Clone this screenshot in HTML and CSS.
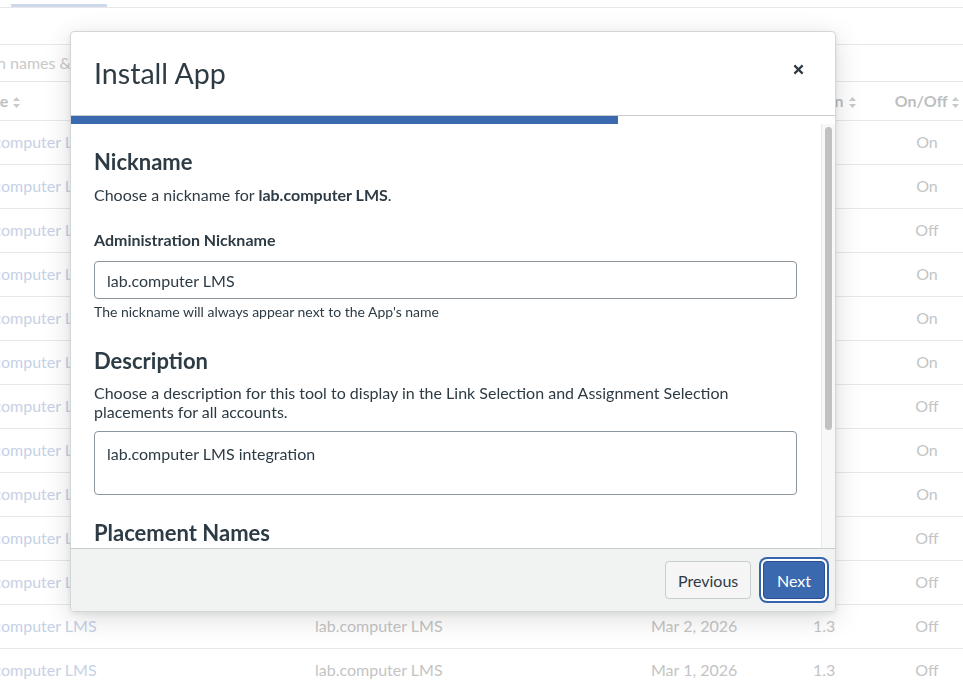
FILE: index.html
```html
<!DOCTYPE html>
<html lang="en">
<head>
<meta charset="utf-8">
<title>Install App</title>
<link rel="stylesheet" href="styles.css">
</head>
<body>
<div class="page">
  <div class="tabs"><div class="tab-active"></div></div>
  <div class="spacer"></div>
  <div class="search">n names &amp; descriptions</div>
  <div class="table">
    <div class="row head">
      <div class="c1"><span class="h-name">Name</span> <svg class="sort" viewBox="0 0 7 11"><path d="M3.5 0L7 4H0Z M3.5 11L0 7H7Z"/></svg></div>
      <div class="c2">Nickname <svg class="sort" viewBox="0 0 7 11"><path d="M3.5 0L7 4H0Z M3.5 11L0 7H7Z"/></svg></div>
      <div class="c3">Installed <svg class="sort" viewBox="0 0 7 11"><path d="M3.5 0L7 4H0Z M3.5 11L0 7H7Z"/></svg></div>
      <div class="c4"><span class="h-ver">Version</span> <svg class="sort" viewBox="0 0 7 11"><path d="M3.5 0L7 4H0Z M3.5 11L0 7H7Z"/></svg></div>
      <div class="c5">On/Off <svg class="sort" viewBox="0 0 7 11"><path d="M3.5 0L7 4H0Z M3.5 11L0 7H7Z"/></svg></div>
    </div>
    <div class="row"><div class="c1 link">lab.computer LMS</div><div class="c2">lab.computer LMS</div><div class="c3">Mar 13, 2026</div><div class="c4">1.3</div><div class="c5">On</div></div>
    <div class="row"><div class="c1 link">lab.computer LMS</div><div class="c2">lab.computer LMS</div><div class="c3">Mar 12, 2026</div><div class="c4">1.3</div><div class="c5">On</div></div>
    <div class="row"><div class="c1 link">lab.computer LMS</div><div class="c2">lab.computer LMS</div><div class="c3">Mar 11, 2026</div><div class="c4">1.3</div><div class="c5">Off</div></div>
    <div class="row"><div class="c1 link">lab.computer LMS</div><div class="c2">lab.computer LMS</div><div class="c3">Mar 10, 2026</div><div class="c4">1.3</div><div class="c5">On</div></div>
    <div class="row"><div class="c1 link">lab.computer LMS</div><div class="c2">lab.computer LMS</div><div class="c3">Mar 9, 2026</div><div class="c4">1.3</div><div class="c5">On</div></div>
    <div class="row"><div class="c1 link">lab.computer LMS</div><div class="c2">lab.computer LMS</div><div class="c3">Mar 8, 2026</div><div class="c4">1.3</div><div class="c5">On</div></div>
    <div class="row"><div class="c1 link">lab.computer LMS</div><div class="c2">lab.computer LMS</div><div class="c3">Mar 7, 2026</div><div class="c4">1.3</div><div class="c5">Off</div></div>
    <div class="row"><div class="c1 link">lab.computer LMS</div><div class="c2">lab.computer LMS</div><div class="c3">Mar 6, 2026</div><div class="c4">1.3</div><div class="c5">On</div></div>
    <div class="row"><div class="c1 link">lab.computer LMS</div><div class="c2">lab.computer LMS</div><div class="c3">Mar 5, 2026</div><div class="c4">1.3</div><div class="c5">On</div></div>
    <div class="row"><div class="c1 link">lab.computer LMS</div><div class="c2">lab.computer LMS</div><div class="c3">Mar 4, 2026</div><div class="c4">1.3</div><div class="c5">Off</div></div>
    <div class="row"><div class="c1 link">lab.computer LMS</div><div class="c2">lab.computer LMS</div><div class="c3">Mar 3, 2026</div><div class="c4">1.3</div><div class="c5">Off</div></div>
    <div class="row"><div class="c1 link">lab.computer LMS</div><div class="c2">lab.computer LMS</div><div class="c3">Mar 2, 2026</div><div class="c4">1.3</div><div class="c5">Off</div></div>
    <div class="row"><div class="c1 link">lab.computer LMS</div><div class="c2">lab.computer LMS</div><div class="c3">Mar 1, 2026</div><div class="c4">1.3</div><div class="c5">Off</div></div>
  </div>
</div>

<div class="modal" role="dialog" aria-label="Install App">
  <div class="modal-header">
    <h1 class="modal-title">Install App</h1>
    <button class="close" aria-label="Close">
      <svg viewBox="0 0 12 12" width="12" height="12"><path d="M1.5 1.5L10.5 10.5M10.5 1.5L1.5 10.5"/></svg>
    </button>
  </div>
  <div class="progress"><div class="progress-fill" style="width:71.6%"></div></div>
  <div class="modal-body">
    <div class="body-content">
      <h2 class="sec first">Nickname</h2>
      <p class="lead">Choose a nickname for <strong>lab.computer LMS</strong>.</p>
      <label class="field-label" for="nick">Administration Nickname</label>
      <input id="nick" class="text-input" type="text" value="lab.computer LMS">
      <div class="hint">The nickname will always appear next to the App's name</div>

      <h2 class="sec">Description</h2>
      <p class="lead lead2">Choose a description for this tool to display in the Link Selection and Assignment Selection placements for all accounts.</p>
      <textarea class="text-area">lab.computer LMS integration</textarea>

      <h2 class="sec sec3">Placement Names</h2>
      <label class="field-label sub" for="p1">Link Selection</label>
      <input id="p1" class="text-input" type="text" value="lab.computer LMS">
      <label class="field-label sub" for="p2">Assignment Selection</label>
      <input id="p2" class="text-input" type="text" value="lab.computer LMS">
    </div>
    <div class="scrollbar"><div class="thumb"></div></div>
  </div>
  <div class="modal-footer">
    <button class="btn btn-secondary">Previous</button>
    <button class="btn btn-primary">Next</button>
  </div>
</div>
</body>
</html>
```

FILE: styles.css
```css
* { box-sizing: border-box; }

html, body {
  margin: 0;
  padding: 0;
}

body {
  font-family: Lato, "Noto Sans", "Liberation Sans", sans-serif;
  color: #2d3b45;
  background: #fff;
  overflow: hidden;
  width: 963px;
  height: 687px;
}

/* ---------- background page (dimmed) ---------- */
.page {
  width: 963px;
  height: 687px;
  overflow: hidden;
}

.tabs {
  height: 8px;
  border-bottom: 1px solid #e8e8e8;
  display: flex;
  align-items: flex-start;
}

.tab-active {
  margin-left: 11px;
  margin-top: 4px;
  width: 96px;
  height: 3px;
  background: #cdd8ea;
}

.spacer {
  height: 37px;
  border-bottom: 1px solid #e8e8e8;
}

.search {
  height: 37px;
  border-bottom: 1px solid #e8e8e8;
  display: flex;
  align-items: center;
  margin-left: -3px;
  padding-bottom: 1px;
  font-size: 16px;
  color: #c9c9c9;
  white-space: nowrap;
}

.table {
  margin-left: -31px;
}

.row {
  display: flex;
  align-items: center;
  height: 44px;
  padding-bottom: 2px;
  border-bottom: 1px solid #e8e8e8;
  font-size: 16px;
  color: #c4c4c4;
  white-space: nowrap;
}

.row.head {
  height: 39px;
  padding-bottom: 1px;
  font-weight: 700;
  color: #bcbfc2;
}

.c1 { width: 346px; }
.c2 { width: 336px; }
.c3 { width: 162px; }
.c4 { width: 78px; }
.c5 { width: 72px; text-align: center; }

.h-name { margin-left: -3px; }
.h-ver { margin-left: -23px; }

.link { color: #c6d1e6; }

.sort {
  width: 7px;
  height: 11px;
  fill: #c8cacc;
  vertical-align: -1px;
  margin-left: 1px;
}

/* ---------- modal ---------- */
.modal {
  position: fixed;
  left: 70px;
  top: 31px;
  width: 766px;
  height: 581px;
  background: #fff;
  border: 1px solid #d3d6d9;
  border-radius: 4px;
  box-shadow: 0 6px 28px rgba(0, 0, 0, 0.14), 0 2px 6px rgba(0, 0, 0, 0.08);
  display: flex;
  flex-direction: column;
  overflow: hidden;
}

.modal-header {
  height: 84px;
  flex: none;
  border-bottom: 1px solid #c7cdd1;
  display: flex;
  align-items: center;
  justify-content: space-between;
  padding: 0 27px 0 23px;
}

.modal-title {
  margin: 0;
  font-size: 28.6px;
  font-weight: 400;
  line-height: 1.2;
  color: #2d3b45;
}

.close {
  width: 20px;
  height: 20px;
  margin-bottom: 8px;
  padding: 0;
  border: 0;
  background: transparent;
  display: flex;
  align-items: center;
  justify-content: center;
  cursor: pointer;
}

.close svg {
  width: 11px;
  height: 11px;
  stroke: #2d3b45;
  stroke-width: 2.4;
  fill: none;
}

.progress {
  height: 8px;
  flex: none;
  background: #fff;
}

.progress-fill {
  height: 100%;
  background: #3b69b0;
}

.modal-body {
  flex: 1;
  min-height: 0;
  display: flex;
}

.body-content {
  flex: 1;
  min-width: 0;
  overflow: hidden;
  padding: 0 24px 0 23px;
}

.scrollbar {
  flex: none;
  width: 14px;
  background: #f8f8f8;
  border-left: 1px solid #e9e9e9;
  padding: 3px 3px 0 3px;
}

.thumb {
  width: 7px;
  height: 303px;
  background: #c1c1c1;
  border-radius: 4px;
}

.sec {
  margin: 25px 0 0;
  font-size: 22px;
  font-weight: 700;
  line-height: 28px;
  color: #2d3b45;
}

.sec.first { margin-top: 24px; }
.sec.sec3 { margin-top: 24px; }

.lead {
  margin: 9px 0 0;
  font-size: 16px;
  line-height: 19px;
}

.lead2 { margin-top: 8px; }

.lead strong { font-weight: 700; }

.field-label {
  display: block;
  margin-top: 24px;
  font-size: 16px;
  font-weight: 700;
  line-height: 24px;
}

.field-label.sub { margin-top: 10px; }

.text-input {
  display: block;
  width: 100%;
  height: 38px;
  margin-top: 9px;
  padding: 0 12px;
  border: 1px solid #8d959d;
  border-radius: 4px;
  font-family: inherit;
  font-size: 16px;
  color: #2d3b45;
  background: #fff;
  outline: none;
}

.hint {
  margin-top: 3px;
  font-size: 14px;
  line-height: 20px;
  color: #2d3b45;
}

.text-area {
  display: block;
  width: 100%;
  height: 64px;
  margin-top: 10px;
  padding: 10px 12px;
  border: 1px solid #8d959d;
  border-radius: 4px;
  font-family: inherit;
  font-size: 16px;
  line-height: 24px;
  color: #2d3b45;
  resize: none;
  outline: none;
  overflow: hidden;
}

.modal-footer {
  height: 63px;
  flex: none;
  border-top: 1px solid #c7cdd1;
  background: #f1f2f2;
  display: flex;
  align-items: center;
  justify-content: flex-end;
  gap: 12px;
  padding: 0 10px;
}

.btn {
  height: 38px;
  padding: 0 12px;
  border-radius: 4px;
  font-family: inherit;
  font-size: 16px;
  cursor: pointer;
}

.btn-secondary {
  width: 86px;
  background: #f5f5f5;
  border: 1px solid #c7cdd1;
  color: #2d3b45;
}

.btn-primary {
  width: 62px;
  background: #3b69b0;
  border: 1px solid #2b5090;
  color: #fff;
  box-shadow: 0 0 0 2px #fff, 0 0 0 4px #3464ac;
}
```
